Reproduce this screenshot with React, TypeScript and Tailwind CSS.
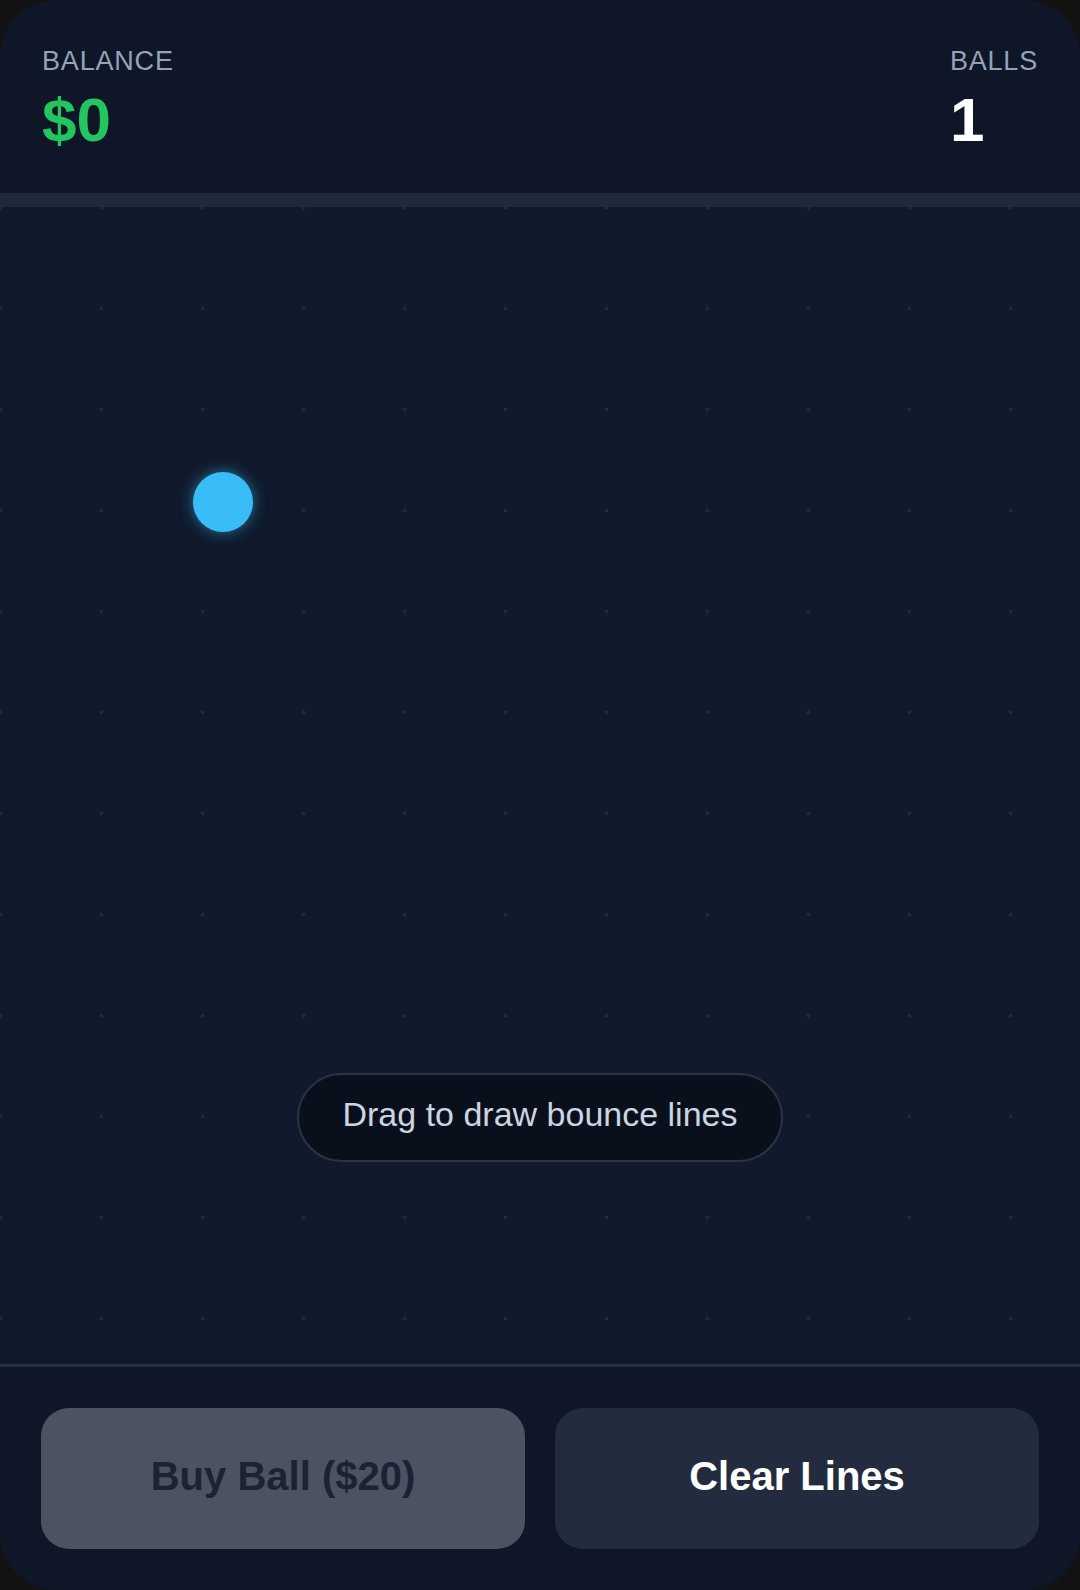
import React, { useState } from "react";

const FONT = { fontFamily: '"Liberation Sans", Arial, sans-serif' };

function Stat({ label, value, valueClass }: { label: string; value: string; valueClass: string }) {
  return (
    <div className="flex flex-col">
      <span className="text-[27px] leading-none tracking-[0.03em] text-[#94a3b8]">{label}</span>
      <span className={`mt-[14px] text-[62px] leading-none font-bold ${valueClass}`}>{value}</span>
    </div>
  );
}

export default function App() {
  const [balance] = useState(0);
  const [balls] = useState(1);

  return (
    <div className="min-h-[1590px] w-full bg-[#131212]" style={FONT}>
      <div className="flex h-[1590px] w-full flex-col overflow-hidden rounded-[56px] bg-[#0e1628]">
        {/* Header */}
        <header className="flex items-start justify-between px-[42px] pt-[48px] pb-[42px]">
          <Stat label="BALANCE" value={`$${balance}`} valueClass="text-[#22c55e]" />
          <Stat label="BALLS" value={`${balls}`} valueClass="text-white" />
        </header>
        <div className="h-[14px] bg-[#1f293a]" />

        {/* Canvas */}
        <div className="relative flex-1 bg-[#101a2c] bg-[radial-gradient(circle,#202a3b_1.6px,transparent_2.2px)] bg-[length:101px_101px] bg-[position:-50px_-50px]">
          <div className="absolute left-[193px] top-[265px] h-[60px] w-[60px] rounded-full bg-[#38bdf8] shadow-[0_0_14px_rgba(56,189,248,0.55)]" />

          <div className="absolute left-1/2 top-[866px] flex h-[89px] w-[486px] -translate-x-1/2 items-center justify-center rounded-full border-2 border-[#2b3445] bg-[#0a0f1c] pb-[6px]">
            <span className="text-[34px] text-[#cbd5e1]">Drag to draw bounce lines</span>
          </div>
        </div>

        {/* Footer */}
        <footer className="grid grid-cols-2 gap-[30px] border-t-[3px] border-[#273143] px-[41px] pt-[41px] pb-[41px]">
          <button className="flex h-[141px] items-center justify-center rounded-[28px] bg-[#4b5261] pb-[5px] text-[40px] font-bold text-[#1c2232]">
            Buy Ball ($20)
          </button>
          <button className="flex h-[141px] items-center justify-center rounded-[28px] bg-[#232c3f] pb-[5px] text-[40px] font-bold text-white">
            Clear Lines
          </button>
        </footer>
      </div>
    </div>
  );
}
